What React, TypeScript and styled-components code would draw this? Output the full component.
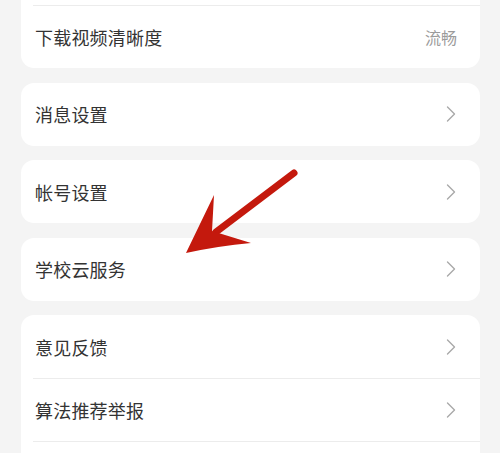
import React from "react";
import styled, { createGlobalStyle } from "styled-components";

const Global = createGlobalStyle`
  html, body { margin: 0; padding: 0; background: #f4f4f4; }
  body { font-family: "Noto Sans CJK SC", "Noto Sans", sans-serif; }
`;

const Screen = styled.div`
  position: relative;
  width: 500px;
  height: 453px;
  overflow: hidden;
  background: #f4f4f4;
`;

const List = styled.div`
  display: flex;
  flex-direction: column;
  gap: 14.5px;
  padding: 0 20px 0 21px;
  margin-top: -58px;
`;

const Card = styled.div`
  background: #ffffff;
  border-radius: 13px;
  overflow: hidden;
`;

const Row = styled.div<{ $divider?: boolean }>`
  position: relative;
  display: flex;
  align-items: center;
  justify-content: space-between;
  height: 63px;
  padding: 0 24px 0 14px;
  &::before {
    content: "";
    display: ${(p) => (p.$divider ? "block" : "none")};
    position: absolute;
    top: 0;
    left: 12px;
    right: 0;
    height: 1px;
    background: #ececec;
  }
`;

const Label = styled.span`
  font-size: 18px;
  color: #333333;
  letter-spacing: 0.2px;
`;

const Value = styled.span`
  font-size: 16px;
  color: #9b9b9b;
  margin-right: -1px;
`;

const Arrow = styled.svg`
  position: absolute;
  left: 0;
  top: 0;
  pointer-events: none;
`;

const Chevron = () => (
  <svg width="10" height="16" viewBox="0 0 10 16">
    <polyline
      points="1.5,1 8.5,8 1.5,15"
      fill="none"
      stroke="#a9a9a9"
      strokeWidth="1.4"
      strokeLinecap="round"
      strokeLinejoin="round"
    />
  </svg>
);

type Item = { label?: string; value?: string; chevron?: boolean };

const groups: Item[][] = [
  [{}, { label: "下载视频清晰度", value: "流畅" }],
  [{ label: "消息设置", chevron: true }],
  [{ label: "帐号设置", chevron: true }],
  [{ label: "学校云服务", chevron: true }],
  [{ label: "意见反馈", chevron: true }, { label: "算法推荐举报", chevron: true }, {}],
];

export default function App() {
  return (
    <Screen>
      <Global />
      <List>
        {groups.map((g, gi) => (
          <Card key={gi}>
            {g.map((it, i) => (
              <Row key={i} $divider={i > 0}>
                {it.label ? <Label>{it.label}</Label> : <span />}
                {it.value ? <Value>{it.value}</Value> : it.chevron ? <Chevron /> : null}
              </Row>
            ))}
          </Card>
        ))}
      </List>
      <Arrow width="500" height="453" viewBox="0 0 500 453">
        <line
          x1="294"
          y1="173"
          x2="216"
          y2="232"
          stroke="#c4190d"
          strokeWidth="7"
          strokeLinecap="round"
        />
        <path
          d="M186 253 Q199 226 214 195 L212 231 L251 243 Q218 246 186 253 Z"
          fill="#c4190d"
        />
      </Arrow>
    </Screen>
  );
}
